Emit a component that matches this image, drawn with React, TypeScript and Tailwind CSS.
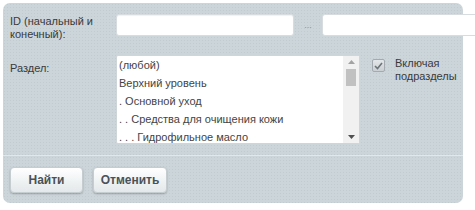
import React from "react";

export default function App() {
  const items = [
    "(любой)",
    "Верхний уровень",
    ". Основной уход",
    ". . Средства для очищения кожи",
    ". . . Гидрофильное масло",
  ];
  return (
    <div className="w-[475px] h-[210px] bg-white overflow-hidden pt-[3px] pl-[3px] text-[11px] text-[#3a3a3a] font-['Liberation_Sans',Arial,sans-serif]">
      <div className="w-[460px] h-[200px] rounded-[7px] bg-[#ccd5da] bg-[radial-gradient(#c2cbd0_0.8px,transparent_0.9px)] bg-[length:3px_3px] flex flex-col">
        <div className="flex flex-col pt-[11px] h-[152px]">
          <div className="flex items-start w-[500px]">
            <div className="w-[113px] shrink-0 pl-[7px] pt-[1px] leading-[13px]">ID (начальный и<br />конечный):</div>
            <div className="w-[178px] shrink-0 h-[22px] bg-white rounded-[3px] border border-[#d6dcdf] shadow-[inset_0_1px_1px_rgba(0,0,0,0.06)]"></div>
            <div className="w-[28px] shrink-0 text-center text-[#8a9398] text-[9px] leading-[22px]">...</div>
            <div className="w-[170px] h-[22px] bg-white rounded-[3px] border border-[#d6dcdf] shrink-0"></div>
          </div>
          <div className="flex items-start mt-[14px]">
            <div className="w-[113px] shrink-0 pl-[7px] pt-[5px]">Раздел:</div>
            <div className="w-[244px] shrink-0 h-[89px] bg-white border border-[#cfd6da] rounded-[2px] flex">
              <div className="flex-1 pl-[2px]">
                {items.map((t) => (
                  <div key={t} className="h-[18px] leading-[18px] whitespace-pre text-[#444]">{t}</div>
                ))}
              </div>
              <div className="w-[16px] bg-[#f1f1f1] flex flex-col items-center">
                <div className="h-[12px] flex items-center justify-center">
                  <svg width="7" height="4" viewBox="0 0 7 4"><path d="M0 4 L3.5 0 L7 4Z" fill="#a3a3a3" /></svg>
                </div>
                <div className="w-[10px] h-[17px] bg-[#c1c1c1] mt-[1px]"></div>
                <div className="flex-1"></div>
                <div className="h-[12px] flex items-center justify-center">
                  <svg width="7" height="4" viewBox="0 0 7 4"><path d="M0 0 L3.5 4 L7 0Z" fill="#505050" /></svg>
                </div>
              </div>
            </div>
            <div className="ml-[12px] mt-[4px] w-[13px] h-[13px] shrink-0 rounded-[2px] bg-[linear-gradient(#e4e7e9,#c9cfd3)] border border-[#a3abb0] flex items-center justify-center">
              <svg width="9" height="8" viewBox="0 0 9 8"><path d="M1 4 L3.5 6.5 L8 1" stroke="#6b7479" strokeWidth="1.6" fill="none" /></svg>
            </div>
            <div className="ml-[10px] leading-[13px] pt-[2px]">Включая<br />подразделы</div>
          </div>
        </div>
        <div className="h-px bg-[#9aa6ac] border-b border-[#e1e7ea]"></div>
        <div className="flex gap-[10px] pl-[7px] pt-[11px]">
          <button className="w-[73px] h-[26px] rounded-[4px] bg-[linear-gradient(#ffffff,#e3e8ea)] border border-[#c5cdd1] shadow-[0_1px_2px_rgba(0,0,0,0.25)] font-bold text-[12px] text-[#4a5257]">Найти</button>
          <button className="w-[74px] h-[26px] rounded-[4px] bg-[linear-gradient(#ffffff,#e3e8ea)] border border-[#c5cdd1] shadow-[0_1px_2px_rgba(0,0,0,0.25)] font-bold text-[12px] text-[#4a5257]">Отменить</button>
        </div>
      </div>
    </div>
  );
}
